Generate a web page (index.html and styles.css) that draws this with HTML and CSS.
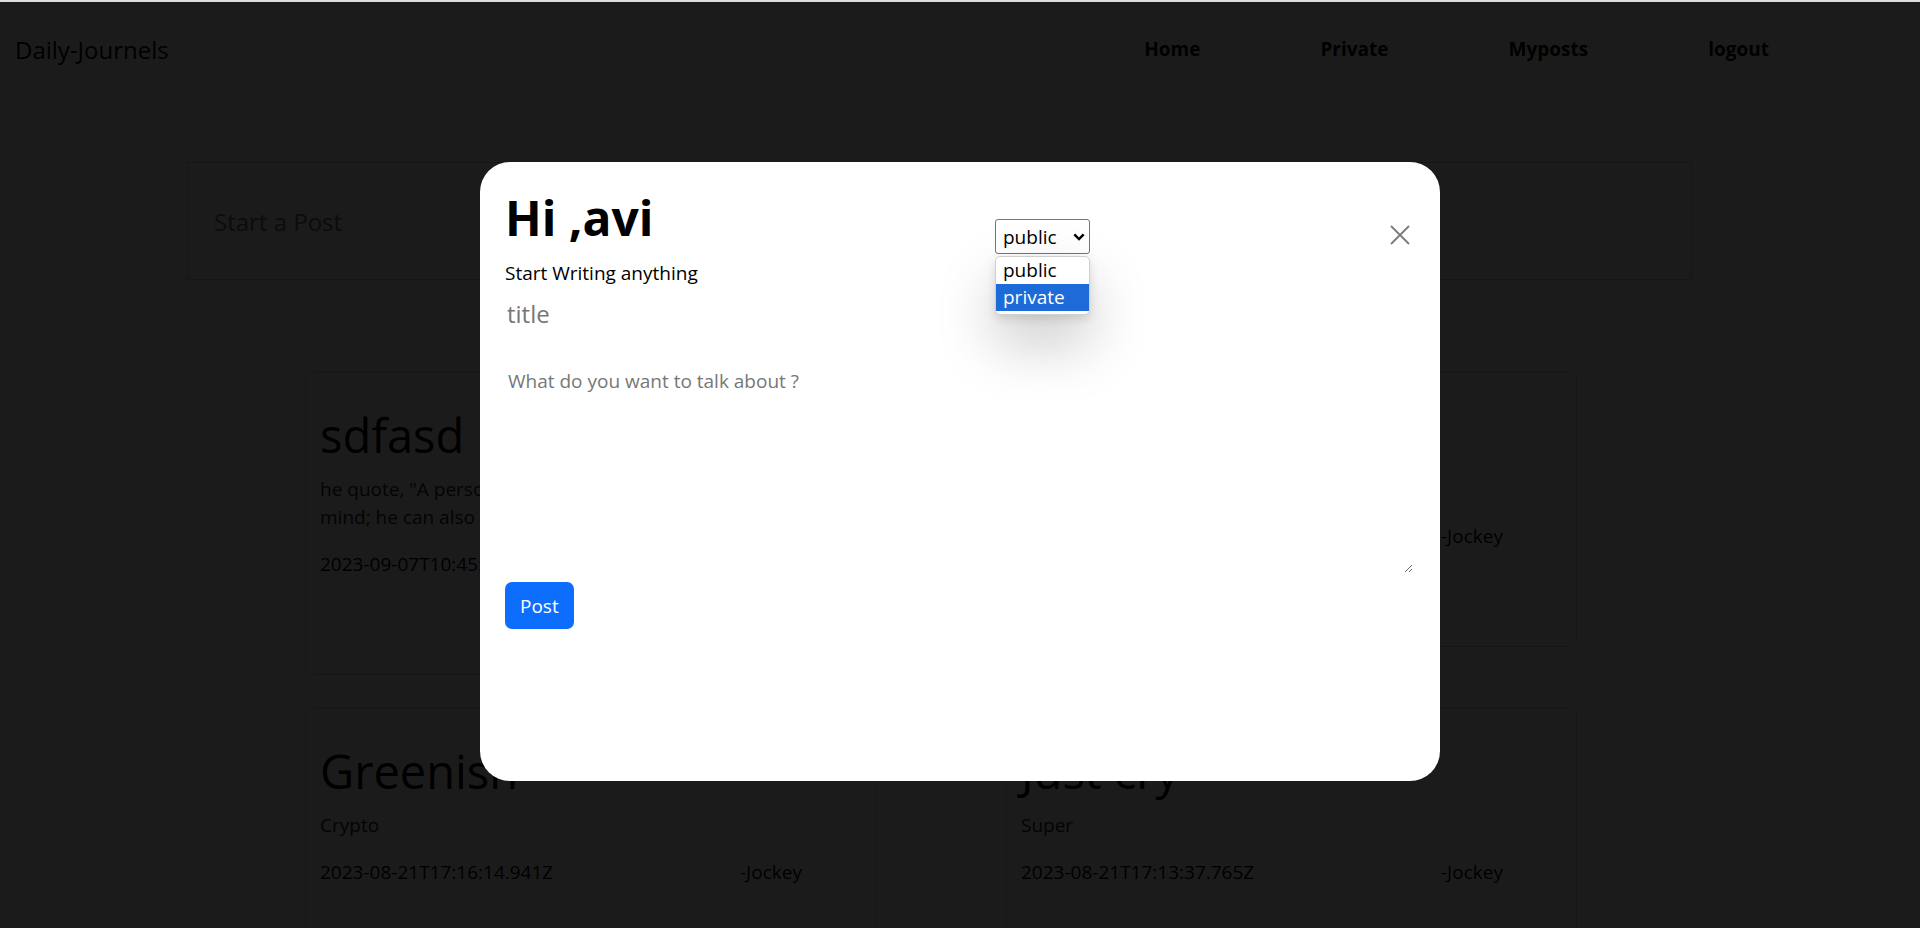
FILE: index.html
```html
<!DOCTYPE html>
<html lang="en">
<head>
<meta charset="utf-8">
<title>Daily-Journels</title>
<link rel="stylesheet" href="styles.css">
</head>
<body>
  <nav class="navbar">
    <a class="brand" href="#">Daily-Journels</a>
    <ul class="nav-links">
      <li><a href="#">Home</a></li>
      <li><a href="#">Private</a></li>
      <li><a href="#">Myposts</a></li>
      <li><a href="#">logout</a></li>
    </ul>
  </nav>

  <main class="main">
    <div class="start-post">Start a Post</div>

    <section class="cards">
      <article class="card">
        <h2 class="card-title">sdfasd</h2>
        <p class="card-text">he quote, "A person who is happy is master of his own<br>mind; he can also change the world."</p>
        <div class="card-meta"><span>2023-09-07T10:45:12.318Z</span><span>-Jockey</span></div>
      </article>
      <article class="card">
        <h2 class="card-title">Hello world</h2>
        <p class="card-text">First post</p>
        <div class="card-meta"><span>2023-08-22T09:11:02.114Z</span><span>-Jockey</span></div>
      </article>
      <article class="card">
        <h2 class="card-title">Greenish</h2>
        <p class="card-text">Crypto</p>
        <div class="card-meta"><span>2023-08-21T17:16:14.941Z</span><span>-Jockey</span></div>
      </article>
      <article class="card">
        <h2 class="card-title">Just cry</h2>
        <p class="card-text">Super</p>
        <div class="card-meta"><span>2023-08-21T17:13:37.765Z</span><span>-Jockey</span></div>
      </article>
    </section>
  </main>

  <div class="backdrop"></div>

  <div class="modal" role="dialog">
    <div class="modal-head">
      <div class="greeting">
        <h1 class="hi">Hi ,avi</h1>
        <p class="sub">Start Writing anything</p>
      </div>
      <div class="select-wrap">
        <select class="visibility">
          <option>public</option>
          <option>private</option>
        </select>
        <svg class="chevron" width="12" height="8" viewBox="0 0 12 8"><path d="M1.3 1.3 L6 6 L10.7 1.3" fill="none" stroke="#000" stroke-width="2.4"/></svg>
        <ul class="dropdown">
          <li class="opt">public</li>
          <li class="opt opt-active">private</li>
        </ul>
      </div>
      <button class="close" aria-label="Close">
        <svg width="20" height="20" viewBox="0 0 20 20"><path d="M1 1 L19 19 M19 1 L1 19" stroke="#7a7a7a" stroke-width="1.8" fill="none"/></svg>
      </button>
    </div>
    <input class="title-input" type="text" placeholder="title">
    <textarea class="body-input" placeholder="What do you want to talk about ?"></textarea>
    <button class="post-btn">Post</button>
  </div>
</body>
</html>
```

FILE: styles.css
```css
* { box-sizing: border-box; }

html, body {
  margin: 0;
  padding: 0;
}

body {
  background: #fff;
  color: #212529;
  font-family: "Open Sans", "Noto Sans", sans-serif;
  font-size: 19px;
  overflow: hidden;
}

.navbar {
  height: 98px;
  display: flex;
  align-items: center;
  padding: 0 151px 0 15px;
}

.brand {
  font-size: 24px;
  color: #000;
  text-decoration: none;
}

.nav-links {
  margin: 0 0 0 auto;
  padding: 0;
  list-style: none;
  display: flex;
  gap: 120px;
}

.nav-links a {
  font-size: 19px;
  font-weight: 700;
  color: #000;
  text-decoration: none;
}

.main {
  padding-top: 64px;
}

.start-post {
  margin: 0 228px 0 187px;
  height: 118px;
  border: 1px solid rgba(0, 0, 0, 0.175);
  display: flex;
  align-items: center;
  padding-left: 26px;
  font-size: 24px;
  color: #6c757d;
}

.cards {
  margin: 91px 0 0 305px;
  display: grid;
  grid-template-columns: 572px 571px;
  column-gap: 129px;
  row-gap: 32px;
  align-items: start;
}

.card {
  border: 1px solid rgba(0, 0, 0, 0.175);
  border-radius: 8px;
  padding: 33px 14px 96px;
  background: #fff;
}

.card-title {
  margin: 0 0 10px;
  font-size: 47px;
  font-weight: 400;
  line-height: 60px;
  color: #000;
}

.card-text {
  margin: 0 0 20px;
  line-height: 28px;
  color: #212529;
}

.card-meta {
  display: grid;
  grid-template-columns: 420px auto;
  line-height: 27px;
  color: #000;
}

.backdrop {
  position: fixed;
  inset: 0;
  background: rgba(0, 0, 0, 0.895);
  border-top: 2px solid #dcdcdc;
  z-index: 10;
}

.modal {
  position: fixed;
  left: 480px;
  top: 162px;
  width: 960px;
  height: 619px;
  background: #fff;
  border-radius: 30px;
  padding: 27px 25px 0 25px;
  z-index: 20;
  display: flex;
  flex-direction: column;
  align-items: flex-start;
}

.modal-head {
  width: 100%;
  display: grid;
  grid-template-columns: 490px auto 1fr;
  align-items: start;
}

.hi {
  margin: 0;
  font-size: 48px;
  font-weight: 700;
  line-height: 58px;
  color: #000;
}

.sub {
  margin: 13px 0 0;
  font-size: 19px;
  line-height: 26px;
  color: #000;
}

.select-wrap {
  position: relative;
  margin-top: 30px;
}

.visibility {
  appearance: none;
  -webkit-appearance: none;
  display: block;
  width: 95px;
  height: 35px;
  border: 1px solid #767676;
  border-radius: 3px;
  background: #fff;
  padding: 0 0 0 7px;
  font-family: inherit;
  font-size: 19px;
  color: #000;
}

.chevron {
  position: absolute;
  right: 5px;
  top: 14px;
}

.dropdown {
  position: absolute;
  left: 0;
  top: 37px;
  width: 95px;
  margin: 0;
  padding: 0 0 3px;
  list-style: none;
  background: #fff;
  border: 1px solid #cfcfcf;
  border-radius: 5px;
  overflow: hidden;
  box-shadow: 0 28px 60px rgba(0, 0, 0, 0.22), 0 4px 10px rgba(0, 0, 0, 0.12);
}

.opt {
  height: 27px;
  line-height: 27px;
  padding-left: 7px;
  font-size: 19px;
  color: #000;
}

.opt-active {
  background: #1c6bd8;
  color: #fff;
}

.close {
  justify-self: end;
  margin-top: 31px;
  padding: 5px;
  border: 0;
  background: transparent;
  display: flex;
}

.title-input {
  margin-top: 10px;
  width: 100%;
  height: 34px;
  border: 0;
  outline: none;
  padding: 0 0 0 2px;
  font-family: inherit;
  font-size: 24px;
  color: #212529;
}

.title-input::placeholder {
  color: #777;
}

.body-input {
  margin-top: 10px;
  width: 908px;
  height: 233px;
  border: 0;
  outline: none;
  padding: 27px 0 0 3px;
  font-family: inherit;
  font-size: 19px;
  line-height: 28px;
  color: #212529;
}

.body-input::placeholder {
  color: #777;
}

.post-btn {
  margin-top: 9px;
  padding: 0 15px;
  height: 47px;
  border: 0;
  border-radius: 7px;
  background: #0d6efd;
  color: #fff;
  font-family: inherit;
  font-size: 19px;
}
```
